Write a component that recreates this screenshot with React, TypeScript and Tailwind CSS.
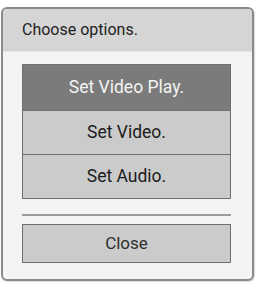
export default function App() {
  const options = ["Set Video Play.", "Set Video.", "Set Audio."];
  const selected = 0;

  return (
    <div className="w-[257px] h-[282px] bg-white pt-[7px] pl-[1px] font-['Roboto','Liberation_Sans',Arial,sans-serif]">
      <div className="w-[253px] h-[274px] border-2 border-[#8a8a8a] rounded-[6px] overflow-hidden bg-[#f4f4f4] flex flex-col shadow-[1px_1px_1px_rgba(0,0,0,0.15)]">
        <div className="h-[43px] shrink-0 bg-[#d5d5d5] border-b border-[#e6e6e6] flex items-center pl-[19px] text-[16px] text-[#222]">
          Choose options.
        </div>

        <div className="pl-[19px] pt-[12px]">
          <div className="w-[209px] border border-[#6f6f6f] flex flex-col">
            {options.map((opt, i) => (
              <div
                key={opt}
                className={
                  i === selected
                    ? "h-[45px] flex items-center justify-center bg-[#7b7b7b] text-[#f4f4f4] text-[17.5px]"
                    : "h-[44px] flex items-center justify-center bg-[#cbcbcb] text-[#1c1c1c] text-[17.5px] border-t border-[#6f6f6f]"
                }
              >
                {opt}
              </div>
            ))}
          </div>

          <div className="w-[209px] h-[2px] bg-[#9c9c9c] mt-[15px]" />

          <div className="w-[209px] h-[39px] mt-[8px] border border-[#6f6f6f] bg-[#cbcbcb] flex items-center justify-center text-[17px] text-[#2e2e2e]">
            Close
          </div>
        </div>
      </div>
    </div>
  );
}
